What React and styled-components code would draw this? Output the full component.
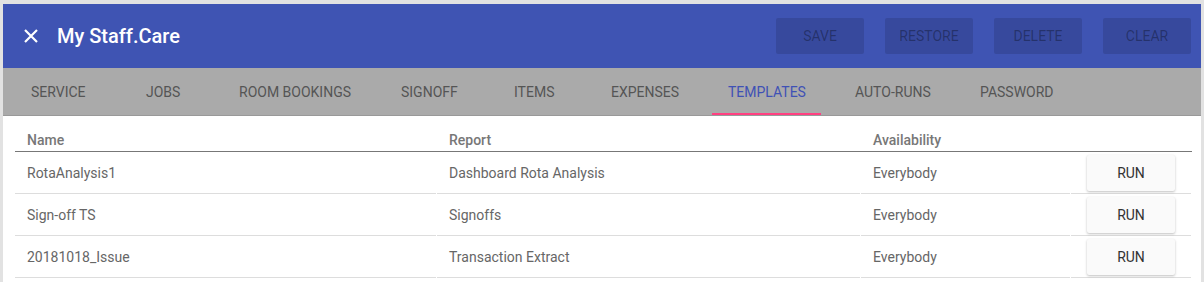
import React from "react";
import styled, { createGlobalStyle } from "styled-components";

const GlobalStyle = createGlobalStyle`
  html, body {
    margin: 0;
    padding: 0;
    background: #e2e2e2;
    font-family: Roboto, "Liberation Sans", sans-serif;
  }
`;

const tabs = [
  { label: "SERVICE", width: 115 },
  { label: "JOBS", width: 93 },
  { label: "ROOM BOOKINGS", width: 162 },
  { label: "SIGNOFF", width: 113 },
  { label: "ITEMS", width: 97 },
  { label: "EXPENSES", width: 117 },
  { label: "TEMPLATES", width: 127, active: true },
  { label: "AUTO-RUNS", width: 125 },
  { label: "PASSWORD", width: 120 },
];

const rows = [
  { name: "RotaAnalysis1", report: "Dashboard Rota Analysis", availability: "Everybody" },
  { name: "Sign-off TS", report: "Signoffs", availability: "Everybody" },
  { name: "20181018_Issue", report: "Transaction Extract", availability: "Everybody" },
];

export default function App() {
  return (
    <>
      <GlobalStyle />
      <Frame>
        <AppBar>
          <CloseButton aria-label="close">
            <svg width="14" height="14" viewBox="0 0 14 14">
              <path d="M1 1L13 13M13 1L1 13" stroke="#fff" strokeWidth="2.2" />
            </svg>
          </CloseButton>
          <Title>My Staff.Care</Title>
          <Actions>
            <ActionButton disabled>SAVE</ActionButton>
            <ActionButton disabled>RESTORE</ActionButton>
            <ActionButton disabled>DELETE</ActionButton>
            <ActionButton disabled>CLEAR</ActionButton>
          </Actions>
        </AppBar>
        <TabBar>
          {tabs.map((t) => (
            <TabSlot key={t.label} $width={t.width}>
              <Tab $active={t.active}>{t.label}</Tab>
            </TabSlot>
          ))}
        </TabBar>
        <Content>
          <Grid>
            <HeadCell>Name</HeadCell>
            <HeadCell>Report</HeadCell>
            <HeadCell>Availability</HeadCell>
            <HeadCell />
            {rows.map((r) => (
              <React.Fragment key={r.name}>
                <Cell>{r.name}</Cell>
                <Cell>{r.report}</Cell>
                <Cell>{r.availability}</Cell>
                <ButtonCell>
                  <RunButton>RUN</RunButton>
                </ButtonCell>
              </React.Fragment>
            ))}
          </Grid>
        </Content>
      </Frame>
    </>
  );
}

const Frame = styled.div`
  margin: 4px 3px 0 3px;
  background: #fff;
  height: 278px;
  overflow: hidden;
`;

const AppBar = styled.div`
  height: 64px;
  background: #3f54b3;
  display: flex;
  align-items: center;
  padding: 0 10px 0 20px;
  box-sizing: border-box;
`;

const CloseButton = styled.button`
  background: none;
  border: none;
  padding: 0;
  width: 16px;
  height: 16px;
  display: flex;
  align-items: center;
  justify-content: center;
  margin-right: 18px;
`;

const Title = styled.div`
  color: #fff;
  font-size: 20px;
  font-weight: 500;
  flex: 1;
`;

const Actions = styled.div`
  display: flex;
  gap: 21px;
`;

const ActionButton = styled.button`
  width: 88px;
  height: 36px;
  border: none;
  border-radius: 2px;
  background: rgba(0, 0, 0, 0.12);
  color: rgba(0, 0, 0, 0.32);
  font-family: Roboto, "Liberation Sans", sans-serif;
  font-size: 14px;
  padding: 0;
`;

const TabBar = styled.div`
  height: 48px;
  background: #aaaaaa;
  display: flex;
  padding-left: 12px;
  border-bottom: 1px solid #999;
  box-sizing: border-box;
`;

const TabSlot = styled.div`
  width: ${(p) => p.$width}px;
  flex-shrink: 0;
  display: flex;
`;

const Tab = styled.div`
  padding: 2px 15px 0 16px;
  display: flex;
  align-items: center;
  font-size: 14px;
  color: ${(p) => (p.$active ? "#3f51b5" : "#555")};
  border-bottom: 2px solid ${(p) => (p.$active ? "#ff4081" : "transparent")};
  box-sizing: border-box;
  height: 47px;
`;

const Content = styled.div`
  padding: 12px 11px 0 12px;
`;

const Grid = styled.div`
  display: grid;
  grid-template-columns: 421px 423px 209px 120px;
  column-gap: 1px;
`;

const HeadCell = styled.div`
  height: 23px;
  border-bottom: 1px solid #777;
  font-size: 14px;
  font-weight: 500;
  color: #777;
  padding-left: 12px;
  display: flex;
  align-items: center;
  margin-right: -1px;
`;

const Cell = styled.div`
  height: 41px;
  border-bottom: 1px solid #ddd;
  font-size: 14px;
  color: #666;
  padding-left: 12px;
  display: flex;
  align-items: center;
`;

const ButtonCell = styled(Cell)`
  padding-left: 0;
  justify-content: center;
`;

const RunButton = styled.button`
  width: 88px;
  height: 36px;
  border: none;
  border-radius: 2px;
  background: #fafafa;
  box-shadow: 0 1px 3px rgba(0, 0, 0, 0.16), 0 1px 2px rgba(0, 0, 0, 0.1);
  font-family: Roboto, "Liberation Sans", sans-serif;
  font-size: 14px;
  color: #333;
  padding: 0;
`;
